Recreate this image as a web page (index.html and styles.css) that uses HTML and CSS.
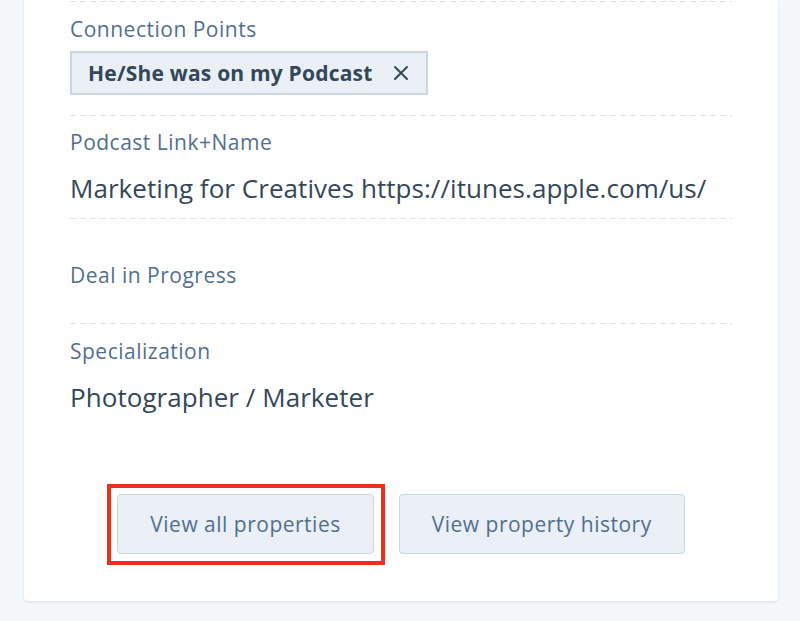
FILE: index.html
```html
<!DOCTYPE html>
<html>
<head>
<meta charset="utf-8">
<link rel="stylesheet" href="styles.css">
</head>
<body>
<div class="page">
  <div class="card">
    <div class="fields">
      <div class="field field-first">
        <div class="label">Connection Points</div>
        <div class="tags">
          <span class="tag"><span class="tag-text">He/She was on my Podcast</span><svg class="tag-x" width="16" height="16" viewBox="0 0 16 16"><path d="M2 2 L14 14 M14 2 L2 14" stroke="#33475b" stroke-width="2" fill="none" stroke-linecap="round"/></svg></span>
        </div>
      </div>
      <div class="field">
        <div class="label">Podcast Link+Name</div>
        <div class="value">Marketing for Creatives https://itunes.apple.com/us/</div>
      </div>
      <div class="field field-empty">
        <div class="label">Deal in Progress</div>
      </div>
      <div class="field field-last">
        <div class="label">Specialization</div>
        <div class="value">Photographer / Marketer</div>
      </div>
    </div>
    <div class="actions">
      <button class="btn btn-highlight">View all properties</button>
      <button class="btn">View property history</button>
    </div>
  </div>
</div>
</body>
</html>
```
FILE: styles.css
```css
html, body {
  margin: 0;
  padding: 0;
}
body {
  background: #f5f8fa;
  font-family: "Open Sans", "Noto Sans", sans-serif;
  width: 800px;
  height: 621px;
  overflow: hidden;
}
.page {
  padding: 0 22px 0 24px;
}
.card {
  background: #ffffff;
  border-radius: 0 0 4px 4px;
  box-shadow: 0 1px 3px rgba(45, 62, 80, 0.14);
  height: 601px;
  box-sizing: border-box;
  padding: 0 46px 0 46px;
  display: flex;
  flex-direction: column;
}
.fields {
  display: flex;
  flex-direction: column;
}
.field {
  padding: 15px 0 14px;
  background-image: repeating-linear-gradient(to right, #dfe3eb 0 6px, transparent 6px 10px);
  background-size: 100% 1px;
  background-repeat: no-repeat;
  background-position: left top;
}
.field-first {
  padding-top: 16px;
  padding-bottom: 20px;
  margin-top: 1px;
}
.field-empty {
  padding-top: 45px;
  padding-bottom: 36px;
}
.field-last {
  padding-top: 16px;
}
.label {
  font-size: 21px;
  line-height: 24px;
  letter-spacing: 0.5px;
  color: #516f90;
}
.value {
  font-size: 26px;
  line-height: 32px;
  color: #33475b;
  margin-top: 18px;
  letter-spacing: 0.05px;
}
.tags {
  margin-top: 10px;
  display: flex;
}
.tag {
  display: inline-flex;
  align-items: center;
  height: 44px;
  box-sizing: border-box;
  background: #eaf0f6;
  border: 2px solid #cbd6e2;
  padding: 0 17px 0 16px;
  color: #33475b;
}
.tag-text {
  font-weight: 700;
  font-size: 21px;
  letter-spacing: 0.2px;
}
.tag-x {
  margin-left: 20px;
  display: block;
}
.actions {
  display: flex;
  justify-content: center;
  gap: 25px;
  margin-top: 67px;
}
.btn {
  height: 60px;
  padding: 0 32px;
  font-family: "Open Sans", "Noto Sans", sans-serif;
  font-size: 21px;
  letter-spacing: 0.5px;
  color: #516f90;
  background: #eaf0f6;
  border: 1px solid #cbd6e2;
  border-radius: 4px;
}
.btn-highlight {
  position: relative;
}
.btn-highlight::after {
  content: "";
  position: absolute;
  left: -11px;
  right: -12px;
  top: -11px;
  bottom: -12px;
  border: 4px solid #e8301a;
}
```
